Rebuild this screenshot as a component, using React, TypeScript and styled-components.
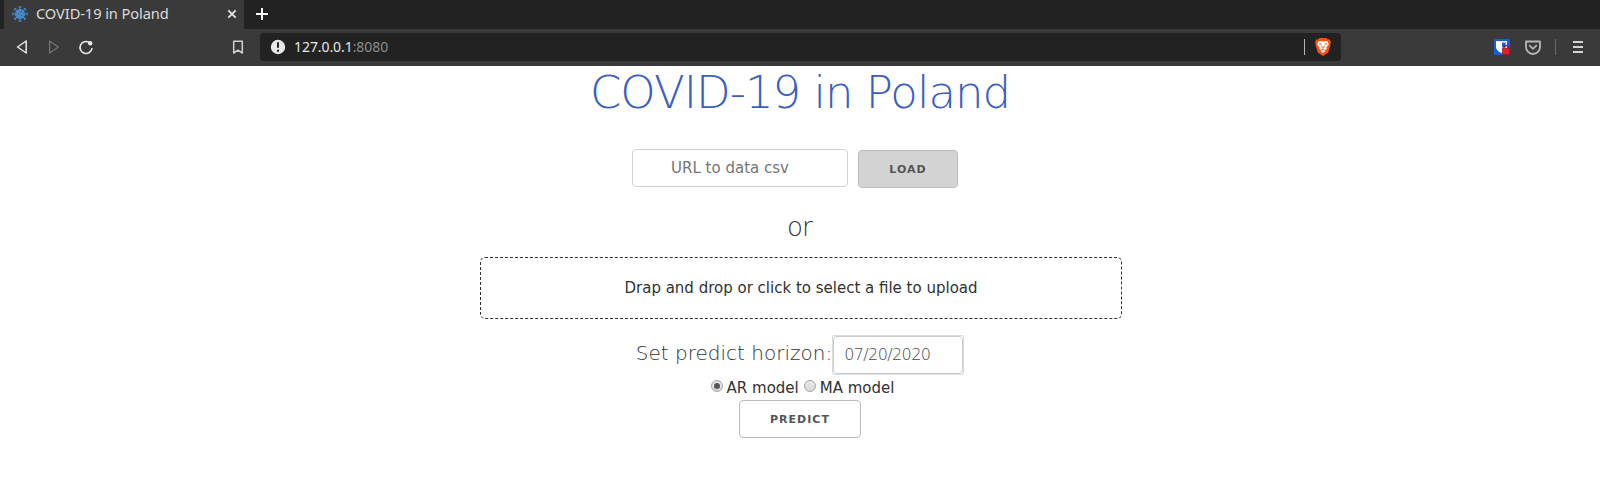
import React from 'react';
import styled, { createGlobalStyle } from 'styled-components';

const GlobalStyle = createGlobalStyle`
  * { box-sizing: border-box; }
  body {
    margin: 0;
    background: #fff;
    color: #323232;
    font-family: "DejaVu Sans", sans-serif;
    font-size: 15px;
    overflow: hidden;
  }
`;

const uiFont = '"Noto Sans", sans-serif';
const lightFont = '"DejaVu Sans", "DejaVu Sans Light", sans-serif';

const Window = styled.div`
  display: flex;
  flex-direction: column;
  height: 499px;
`;

const TabStrip = styled.div`
  display: flex;
  height: 29px;
  padding-left: 4px;
  background: #222;
`;

const Tab = styled.div`
  display: flex;
  align-items: center;
  width: 240px;
  padding: 0 7px 1px 8px;
  background: #3a3a3a;
  color: #dcdcdc;
  font: 14.67px/26px ${uiFont};
  letter-spacing: -0.1px;
`;

const TabTitle = styled.span`
  flex: 1;
  margin-left: 8px;
  padding-bottom: 2px;
  white-space: nowrap;
`;

const NewTab = styled.div`
  display: flex;
  align-items: center;
  margin-left: 12px;
  padding-bottom: 1px;
`;

const Toolbar = styled.div`
  display: flex;
  align-items: center;
  height: 37px;
  padding: 0 16px 1px 14px;
  background: #3a3a3a;
`;

const NavButtons = styled.div`
  display: flex;
  gap: 16px;
  width: 216px;
`;

const AddressBar = styled.div`
  display: flex;
  align-items: center;
  width: 1081px;
  height: 28px;
  margin: 0 0 1px 14px;
  padding: 0 10px;
  border-radius: 4px;
  background: #222;
  color: #e6e6e6;
  font: 14px/28px ${uiFont};
`;

const Address = styled.span`
  flex: 1;
  margin-left: 8px;
  letter-spacing: -0.07px;
`;

const Port = styled.span`
  color: #8b8b8b;
`;

const Divider = styled.i<{ $tone: string }>`
  width: 1px;
  height: 16px;
  background: ${(p) => p.$tone};
`;

const Extensions = styled.div`
  display: flex;
  align-items: center;
  gap: 15px;
  margin-left: auto;
`;

const Page = styled.main`
  display: flex;
  flex-direction: column;
  align-items: center;
`;

const Title = styled.h1`
  margin: 0;
  color: #3a5fc0;
  font: 200 45px/54px ${lightFont};
  letter-spacing: -1px;
`;

const UrlForm = styled.div`
  display: flex;
  align-items: flex-start;
  gap: 10px;
  margin: 29px 10px 0 0;
`;

const UrlInput = styled.input`
  width: 216px;
  height: 38px;
  padding: 0 20px 1px 0;
  border: 1px solid #d1d1d1;
  border-radius: 4px;
  background: #fff;
  font: 15px "DejaVu Sans", sans-serif;
  text-align: center;
  &::placeholder { color: #757575; opacity: 1; }
`;

const Button = styled.button<{ $filled?: boolean; $width: number }>`
  width: ${(p) => p.$width}px;
  height: 38px;
  margin-top: ${(p) => (p.$filled ? 1 : 0)}px;
  padding: 1px 0 0;
  border: 1px solid #bbb;
  border-radius: 4px;
  background: ${(p) => (p.$filled ? '#d3d3d3' : '#fff')};
  color: #555;
  font: 700 11px/35px "DejaVu Sans", sans-serif;
  letter-spacing: 1px;
`;

const Or = styled.h4`
  margin: 21px 1px 0 0;
  font: 200 26px/36px ${lightFont};
  letter-spacing: -0.8px;
`;

const DropZone = styled.div`
  width: 642px;
  height: 62px;
  margin: 12px 0 0 2px;
  border: 1px dashed #323232;
  border-radius: 5px;
  line-height: 60px;
  text-align: center;
`;

const HorizonRow = styled.div`
  display: flex;
  align-items: flex-start;
  margin-top: 16px;
`;

const HorizonLabel = styled.span`
  font: 200 20px/36px ${lightFont};
`;

const DateFrame = styled.div`
  width: 132px;
  height: 40px;
  border: 1px solid #dbdbdb;
  border-radius: 2px;
`;

const DateInput = styled.div`
  height: 38px;
  padding-left: 10px;
  border: 1px solid #cacccd;
  border-radius: 4px;
  color: #484848;
  font: 200 16px/36px ${lightFont};
  letter-spacing: -0.6px;
`;

const Models = styled.div`
  display: flex;
  height: 25px;
  margin-left: 10px;
`;

const Model = styled.label`
  display: flex;
  align-items: center;
  line-height: 25px;
  margin-right: 5px;
`;

const ModelName = styled.span`
  padding-top: 1px;
`;

const Radio = styled.i<{ $checked?: boolean }>`
  display: grid;
  place-items: center;
  width: 12px;
  height: 12px;
  margin: 0 4px 3px 0;
  border: 1px solid #a3a3a3;
  border-radius: 50%;
  background: linear-gradient(#e9e9e9, #dadada);
  &::after {
    content: "";
    width: 6px;
    height: 6px;
    border-radius: 50%;
    background: ${(p) => (p.$checked ? '#555' : 'transparent')};
  }
`;

const VirusIcon = () => (
  <svg width="16" height="16" viewBox="0 0 16 16" stroke="#4689ca" fill="#4689ca">
    <path d="M8 1v14M1 8h14M3 3l10 10M13 3 3 13M6.5.8h3M6.5 15.2h3M.8 6.5v3M15.2 6.5v3M2 4l2-2M12 2l2 2M2 12l2 2M12 14l2-2" strokeWidth="1.2" />
    <circle cx="8" cy="8" r="4.6" />
    <path d="M9 5.5h1M6 7.5h1M9 9.5h1" stroke="#285b8d" />
  </svg>
);

const App = () => (
  <Window>
    <GlobalStyle />
    <TabStrip>
      <Tab>
        <VirusIcon />
        <TabTitle>COVID-19 in Poland</TabTitle>
        <svg width="10" height="10" viewBox="0 0 10 10" stroke="#e6e6e6" strokeWidth="1.8"><path d="m1.3 1.3 7.4 7.4m0-7.4L1.3 8.7" /></svg>
      </Tab>
      <NewTab>
        <svg width="12" height="12" viewBox="0 0 12 12" stroke="#fff" strokeWidth="2"><path d="M6 0v12M0 6h12" /></svg>
      </NewTab>
    </TabStrip>
    <Toolbar>
      <NavButtons>
        <svg width="16" height="16" viewBox="0 0 16 16" fill="none" stroke="#e8e8e8" strokeWidth="1.5" strokeLinejoin="round"><path d="M12.2 2v12L3.5 8z" /></svg>
        <svg width="16" height="16" viewBox="0 0 16 16" fill="none" stroke="#737373" strokeWidth="1.3" strokeLinejoin="round"><path d="M3.6 2v12l8.7-6z" /></svg>
        <svg width="16" height="16" viewBox="0 0 16 16" fill="none" stroke="#e8e8e8" strokeWidth="1.6"><path d="M11.4 3.5A6 6 0 1 0 14 9" /><circle cx="12.2" cy="4.2" r="2.2" fill="#e8e8e8" stroke="none" /></svg>
      </NavButtons>
      <svg width="16" height="16" viewBox="0 0 16 16" fill="none" stroke="#d0d0d0" strokeWidth="1.5"><path d="M3.7 2.2h8.6V14L8 11.2 3.7 14z" strokeLinejoin="round" /></svg>
      <AddressBar>
        <svg width="16" height="16" viewBox="0 0 16 16"><circle cx="8" cy="8" r="7.2" fill="#e8e8e8" /><path d="M8 3.2v5.6M8 10.7v2" stroke="#222" strokeWidth="2" /></svg>
        <Address>127.0.0.1<Port>:8080</Port></Address>
        <Divider $tone="#b5b5b5" />
        <svg width="16" height="18" viewBox="0 0 16 18" style={{ marginLeft: 10 }}>
          <path d="M4.5 0h7L13 1.5l1.5-.2L16 4l-.7 2 .2 1-2.3 7.5L8 18l-5.2-3.5L.5 7l.2-1L0 4l1.5-2.7 1.5.2z" fill="#fb5010" />
          <path d="m3.4 3.6 2.2-.6L8 3.4l2.4-.4 2.2.6 1.2 2.6-2.4 3.2.3 1.5-2 1 .7 1.3L8 14.8l-2.4-1.6.7-1.3-2-1 .3-1.5-2.4-3.2z" fill="#fff" />
          <path d="M4 5.7 6.6 6.2M12 5.7l-2.6.5M6.8 7.6l.2 2 1 .6 1-.6.2-2M6.4 11.7h3.2" fill="none" stroke="#fb5010" strokeWidth=".9" />
        </svg>
      </AddressBar>
      <Extensions>
        <svg width="16" height="16" viewBox="0 0 16 16">
          <rect width="16" height="16" rx="1.5" fill="#175ddc" />
          <path d="M2 2h11v6c0 3-2.5 5-5.2 6.2C5 13 2 11 2 8z" fill="#fff" />
          <path d="M8 3.5h3.6v5H8z" fill="#175ddc" />
          <path d="M10 9.5V8.6a2 2 0 0 1 4 0v.9" fill="none" stroke="#a50d25" strokeWidth="1.3" />
          <path d="M8.3 9.5h7.4v6H8.3z" fill="#ed1c24" stroke="#8d1420" strokeWidth=".7" />
        </svg>
        <svg width="16" height="16" viewBox="0 0 16 16" fill="none" stroke="#b8b8b8" strokeWidth="1.8"><path d="M1 2.5h14V8A7 7 0 0 1 1 8z" strokeLinejoin="round" /><path d="m4.2 6.2 3.8 3.6 3.8-3.6" /></svg>
        <Divider $tone="#6a6a6a" style={{ marginLeft: -1 }} />
        <svg width="12" height="14" viewBox="0 0 12 14" stroke="#d3d3d3" strokeWidth="1.8" style={{ marginLeft: 1 }}><path d="M1 2h10M1 7h10M1 12h10" /></svg>
      </Extensions>
    </Toolbar>
    <Page>
      <Title>COVID-19 in Poland</Title>
      <UrlForm>
        <UrlInput placeholder="URL to data csv" />
        <Button $filled $width={100}>LOAD</Button>
      </UrlForm>
      <Or>or</Or>
      <DropZone>Drap and drop or click to select a file to upload</DropZone>
      <HorizonRow>
        <HorizonLabel>Set predict horizon:</HorizonLabel>
        <DateFrame><DateInput>07/20/2020</DateInput></DateFrame>
      </HorizonRow>
      <Models>
        <Model><Radio $checked /><ModelName>AR model</ModelName></Model>
        <Model><Radio /><ModelName>MA model</ModelName></Model>
      </Models>
      <Button $width={122}>PREDICT</Button>
    </Page>
  </Window>
);

export default App;
